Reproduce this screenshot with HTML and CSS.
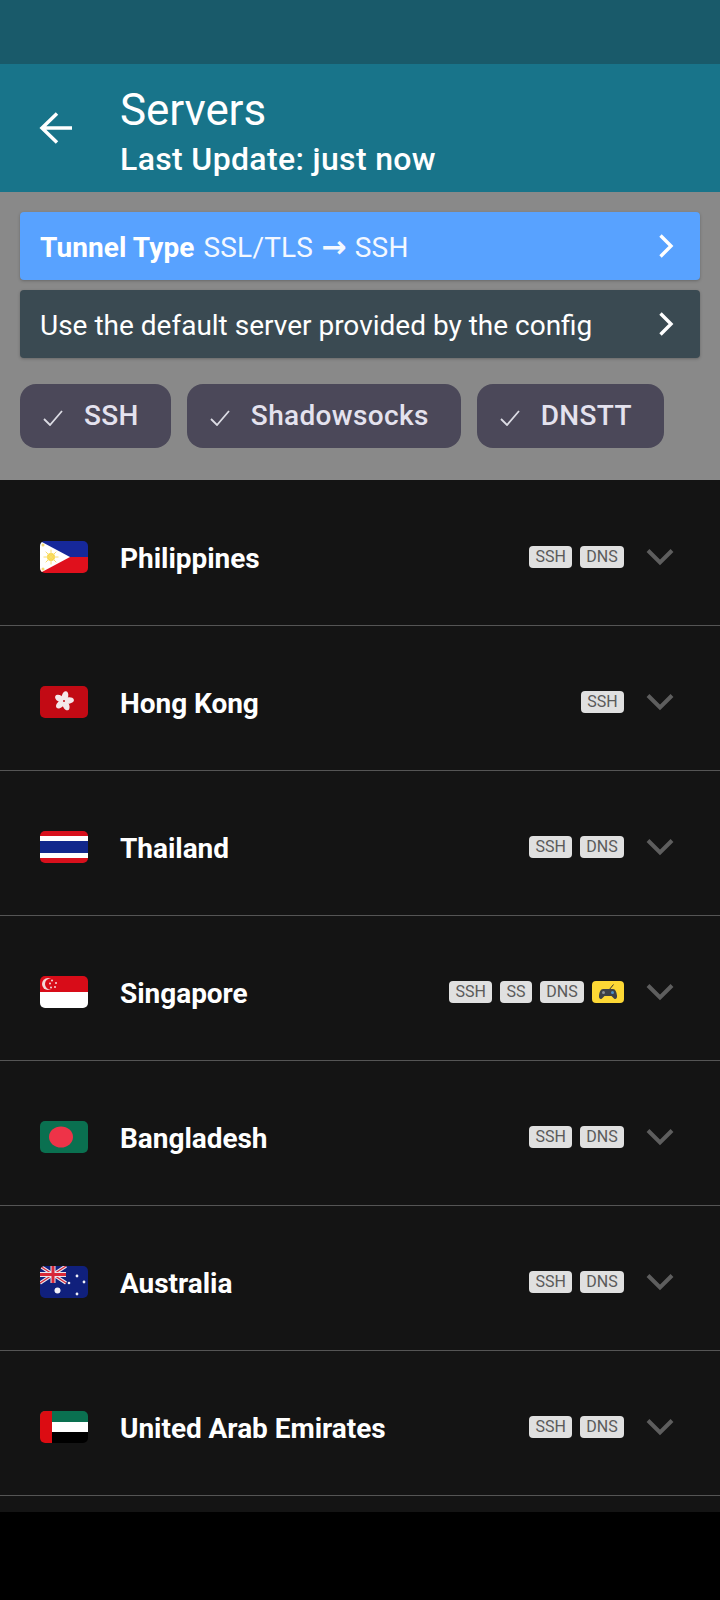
FILE: index.html
```html
<!DOCTYPE html>
<html lang="en">
<head>
<meta charset="utf-8">
<title>Servers</title>
<link rel="stylesheet" href="styles.css">
</head>
<body>
<div class="status"></div>
<header class="appbar">
  <svg class="back" viewBox="0 0 34 32" width="34" height="32"><path d="M33 16H3M18 1.500 3 16 18 30.500" fill="none" stroke="#fff" stroke-width="3.500"/></svg>
  <div class="titles">
    <div class="title">Servers</div>
    <div class="subtitle">Last Update: just now</div>
  </div>
</header>
<section class="panel">
  <div class="btn blue">
    <span class="btn-text"><b>Tunnel Type</b> <span class="tt">SSL/TLS <span class="arrow">→</span> SSH</span></span>
    <svg class="chev" viewBox="0 0 16 24" width="16" height="24"><path d="M2.500 1.500 13 12 2.500 22.500" fill="none" stroke="#fff" stroke-width="3.400"/></svg>
  </div>
  <div class="btn slate">
    <span class="btn-text">Use the default server provided by the config</span>
    <svg class="chev" viewBox="0 0 16 24" width="16" height="24"><path d="M2.500 1.500 13 12 2.500 22.500" fill="none" stroke="#fff" stroke-width="3.400"/></svg>
  </div>
  <div class="chips">
    <div class="chip"><svg class="check" viewBox="0 0 20 16" width="20" height="16"><path d="M1 9l6 6L19 1" fill="none" stroke="#dcdce4" stroke-width="1.800"/></svg>SSH</div>
    <div class="chip"><svg class="check" viewBox="0 0 20 16" width="20" height="16"><path d="M1 9l6 6L19 1" fill="none" stroke="#dcdce4" stroke-width="1.800"/></svg>Shadowsocks</div>
    <div class="chip"><svg class="check" viewBox="0 0 20 16" width="20" height="16"><path d="M1 9l6 6L19 1" fill="none" stroke="#dcdce4" stroke-width="1.800"/></svg>DNSTT</div>
  </div>
</section>
<main class="list">
  <div class="row">
    <svg class="flag" viewBox="0 0 48 32"><rect width="48" height="16" fill="#16289a"/><rect y="16" width="48" height="16" fill="#e0101c"/><path d="M0 0 30 16 0 32Z" fill="#fff"/><circle cx="11" cy="16" r="4" fill="#f8d848"/><path d="M11 8.500v15M3.500 16h15M5.700 10.700l10.600 10.600M16.300 10.700 5.700 21.300" stroke="#f8dc70" stroke-width="1"/><circle cx="3" cy="4" r="1.500" fill="#f0d878"/><circle cx="3" cy="28" r="1.500" fill="#f0d878"/></svg>
    <span class="name">Philippines</span>
    <span class="badges"><span class="badge">SSH</span><span class="badge">DNS</span></span>
    <svg class="down" viewBox="0 0 28 18" width="28" height="18"><path d="M2 2.500 14 14.500 26 2.500" fill="none" stroke="#5e5e5e" stroke-width="4"/></svg>
  </div>
  <div class="row">
    <svg class="flag" viewBox="0 0 48 32"><rect width="48" height="32" fill="#c20a14"/><g fill="#f4e8ea" transform="rotate(12 24 15)"><ellipse cx="24" cy="10" rx="3.200" ry="5"/><ellipse cx="24" cy="10" rx="3.200" ry="5" transform="rotate(72 24 15)"/><ellipse cx="24" cy="10" rx="3.200" ry="5" transform="rotate(144 24 15)"/><ellipse cx="24" cy="10" rx="3.200" ry="5" transform="rotate(216 24 15)"/><ellipse cx="24" cy="10" rx="3.200" ry="5" transform="rotate(288 24 15)"/></g><circle cx="24" cy="15" r="1" fill="#c20a14"/></svg>
    <span class="name">Hong Kong</span>
    <span class="badges"><span class="badge">SSH</span></span>
    <svg class="down" viewBox="0 0 28 18" width="28" height="18"><path d="M2 2.500 14 14.500 26 2.500" fill="none" stroke="#5e5e5e" stroke-width="4"/></svg>
  </div>
  <div class="row">
    <svg class="flag" viewBox="0 0 48 32"><rect width="48" height="32" fill="#d8101c"/><rect y="5" width="48" height="22" fill="#fff"/><rect y="10" width="48" height="12" fill="#12288c"/></svg>
    <span class="name">Thailand</span>
    <span class="badges"><span class="badge">SSH</span><span class="badge">DNS</span></span>
    <svg class="down" viewBox="0 0 28 18" width="28" height="18"><path d="M2 2.500 14 14.500 26 2.500" fill="none" stroke="#5e5e5e" stroke-width="4"/></svg>
  </div>
  <div class="row">
    <svg class="flag" viewBox="0 0 48 32"><rect width="48" height="16" fill="#d80c18"/><rect y="16" width="48" height="16" fill="#fff"/><circle cx="8" cy="8" r="6" fill="#f4d8d8"/><circle cx="10.500" cy="8" r="5.500" fill="#d80c18"/><g fill="#f4d8d8"><circle cx="12" cy="4.500" r="1"/><circle cx="16" cy="7" r="1"/><circle cx="15" cy="11" r="1"/><circle cx="11" cy="11.500" r="1"/><circle cx="10" cy="7.500" r="1"/></g></svg>
    <span class="name">Singapore</span>
    <span class="badges"><span class="badge">SSH</span><span class="badge">SS</span><span class="badge">DNS</span><span class="badge game"><svg viewBox="0 0 20 18" width="20" height="18"><path d="M11 7 15.500 1.500" fill="none" stroke="#333" stroke-width="1"/><path d="M5 6h10c2.500 0 3.500 3 4 6.500.4 3-1.500 4.500-3 3L13.500 13h-7L4 15.500c-1.500 1.500-3.400 0-3-3C1.500 9 2.500 6 5 6Z" fill="#3c4148"/><circle cx="14.500" cy="9.500" r="1.500" fill="#4a90c8"/><circle cx="5.500" cy="9.500" r="1.500" fill="#8a9098"/></svg></span></span>
    <svg class="down" viewBox="0 0 28 18" width="28" height="18"><path d="M2 2.500 14 14.500 26 2.500" fill="none" stroke="#5e5e5e" stroke-width="4"/></svg>
  </div>
  <div class="row">
    <svg class="flag" viewBox="0 0 48 32"><rect width="48" height="32" fill="#0a7050"/><ellipse cx="21" cy="16" rx="12" ry="10.500" fill="#ee3348"/></svg>
    <span class="name">Bangladesh</span>
    <span class="badges"><span class="badge">SSH</span><span class="badge">DNS</span></span>
    <svg class="down" viewBox="0 0 28 18" width="28" height="18"><path d="M2 2.500 14 14.500 26 2.500" fill="none" stroke="#5e5e5e" stroke-width="4"/></svg>
  </div>
  <div class="row">
    <svg class="flag" viewBox="0 0 48 32"><rect width="48" height="32" fill="#10207c"/><path d="M0 0 26 17M26 0 0 17" stroke="#e8e4ec" stroke-width="3.400"/><path d="M0 0 26 17M26 0 0 17" stroke="#d82838" stroke-width="1.200"/><path d="M13 0v17M0 8.500h26" stroke="#e8e4ec" stroke-width="5"/><path d="M13 0v17M0 8.500h26" stroke="#d82838" stroke-width="3"/><g fill="#f0f0f8"><circle cx="17.500" cy="24.500" r="3"/><circle cx="37" cy="10" r="1.400"/><circle cx="29" cy="17" r="1.300"/><circle cx="44" cy="16" r="1.400"/><circle cx="37" cy="28" r="1.400"/></g></svg>
    <span class="name">Australia</span>
    <span class="badges"><span class="badge">SSH</span><span class="badge">DNS</span></span>
    <svg class="down" viewBox="0 0 28 18" width="28" height="18"><path d="M2 2.500 14 14.500 26 2.500" fill="none" stroke="#5e5e5e" stroke-width="4"/></svg>
  </div>
  <div class="row">
    <svg class="flag" viewBox="0 0 48 32"><rect width="48" height="11" fill="#0a7050"/><rect y="11" width="48" height="10" fill="#fff"/><rect y="21" width="48" height="11" fill="#000"/><rect width="12" height="32" fill="#dc0c12"/></svg>
    <span class="name">United Arab Emirates</span>
    <span class="badges"><span class="badge">SSH</span><span class="badge">DNS</span></span>
    <svg class="down" viewBox="0 0 28 18" width="28" height="18"><path d="M2 2.500 14 14.500 26 2.500" fill="none" stroke="#5e5e5e" stroke-width="4"/></svg>
  </div>
</main>
</body>
</html>
```

FILE: styles.css
```css
* { box-sizing: border-box; }
html, body { margin: 0; padding: 0; background: #000; }
body {
  width: 720px;
  height: 1600px;
  overflow: hidden;
  font-family: Roboto, "Liberation Sans", sans-serif;
  color: #fff;
}
.status { height: 64px; background: #195a6a; }
.appbar {
  height: 128px;
  background: #18748a;
  display: flex;
  align-items: center;
  padding-left: 39px;
}
.back { margin-right: 47px; }
.titles { display: flex; flex-direction: column; padding-top: 8px; }
.title { font-size: 44px; line-height: 48px; letter-spacing: -.1px; }
.subtitle { font-size: 32px; line-height: 40px; font-weight: 500; letter-spacing: .35px; margin-top: 5px; }
.panel {
  height: 288px;
  background: #898989;
  padding: 20px 20px 0;
  display: flex;
  flex-direction: column;
}
.btn {
  height: 68px;
  border-radius: 4px;
  display: flex;
  align-items: center;
  justify-content: space-between;
  padding: 0 26px 0 20px;
  font-size: 28px;
  box-shadow: 0 1px 3px rgba(0,0,0,.25);
  margin-bottom: 10px;
}
.btn-text { display: block; padding-top: 2px; }
.btn-text b { font-weight: 700; margin-right: 2px; letter-spacing: .1px; }
.tt { color: #f4f8ff; letter-spacing: .2px; }
.arrow { font-family: "DejaVu Sans", sans-serif; font-weight: 700; font-size: 30px; line-height: 0; margin: 0 1px; }
.blue { background: #58a2ff; }
.slate { background: #3a4a52; }
.chips { display: flex; gap: 16px; margin-top: 16px; }
.chip {
  height: 64px;
  border-radius: 16px;
  background: #4b4859;
  display: flex;
  align-items: center;
  padding: 0 32px 2px 23px;
  color: #e4e2ee;
  font-size: 28px;
  font-weight: 500;
  letter-spacing: .35px;
}
.check { margin-right: 21px; margin-top: 6px; }
.list { background: #141414; padding: 1px 0 16px; }
.row {
  height: 145px;
  border-bottom: 1px solid #555;
  display: flex;
  align-items: center;
  padding: 10px 46px 0 40px;
}
.flag { width: 48px; height: 32px; border-radius: 5px; flex: none; margin: 0 32px 2px 0; }
.name { font-size: 28px; font-weight: 700; letter-spacing: -.04px; flex: 1; }
.badges { display: flex; gap: 8px; margin-right: 22px; margin-bottom: 2px; }
.badge {
  height: 22px;
  min-width: 32px;
  padding: 0 6.250px;
  border-radius: 4px;
  background: #e0e0e0;
  color: #5a5a5a;
  font-size: 16px;
  line-height: 22px;
  text-align: center;
}
.game { background: #fdd835; display: flex; align-items: center; justify-content: center; padding: 0; }
.down { flex: none; margin-bottom: 2px; }
```
